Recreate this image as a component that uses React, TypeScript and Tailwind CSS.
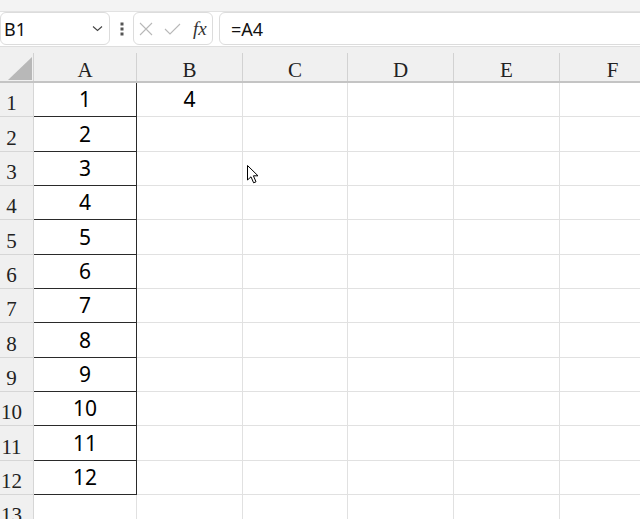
import React from "react";

const cols = [
  { l: "A", w: "w-[103px]" },
  { l: "B", w: "w-[106px]" },
  { l: "C", w: "w-[105px]" },
  { l: "D", w: "w-[106px]" },
  { l: "E", w: "w-[106px]" },
  { l: "F", w: "w-[106px]" },
];

const rows = [
  { n: 1, h: "h-[34px]", a: "1", b: "4" },
  { n: 2, h: "h-[35px]", a: "2" },
  { n: 3, h: "h-[34px]", a: "3" },
  { n: 4, h: "h-[34px]", a: "4" },
  { n: 5, h: "h-[35px]", a: "5" },
  { n: 6, h: "h-[34px]", a: "6" },
  { n: 7, h: "h-[34px]", a: "7" },
  { n: 8, h: "h-[35px]", a: "8" },
  { n: 9, h: "h-[34px]", a: "9" },
  { n: 10, h: "h-[34px]", a: "10" },
  { n: 11, h: "h-[35px]", a: "11" },
  { n: 12, h: "h-[34px]", a: "12" },
  { n: 13, h: "h-[34px]" },
];

const sans = "font-['Noto_Sans',sans-serif]";
const serif = "font-['Liberation_Serif',serif]";

export default function App() {
  return (
    <div className="relative w-[640px] h-[519px] overflow-hidden bg-white text-black">
      {/* top strip */}
      <div className="h-[12px] bg-[#f3f3f3] border-b border-[#e2e2e2]" />

      {/* formula bar */}
      <div className="h-[35px] flex border-b border-[#dedede] bg-white">
        <div className="w-[110px] shrink-0 h-[33px] border border-[#dcdcdc] rounded-[6px] flex items-center justify-between pl-[3px] pr-[6px]">
          <span className={`${sans} text-[18px] leading-none text-[#111]`}>B1</span>
          <svg width="11" height="7" viewBox="0 0 11 7" fill="none">
            <path d="M1 1.5 L5.5 5.5 L10 1.5" stroke="#444" strokeWidth="1.1" />
          </svg>
        </div>
        <div className="w-[23px] shrink-0 h-[33px] flex items-center justify-center">
          <svg width="4" height="14" viewBox="0 0 4 14">
            <rect x="0.5" y="0.5" width="3" height="3" fill="#555" />
            <rect x="0.5" y="5.5" width="3" height="3" fill="#555" />
            <rect x="0.5" y="10.5" width="3" height="3" fill="#555" />
          </svg>
        </div>
        <div className="w-[80px] shrink-0 h-[33px] border border-[#dcdcdc] rounded-[6px] flex items-center pl-[5px] gap-[11px]">
          <svg width="14" height="14" viewBox="0 0 14 14" fill="none">
            <path d="M1 1 L13 13 M13 1 L1 13" stroke="#b8b8b8" strokeWidth="1.1" />
          </svg>
          <svg width="17" height="12" viewBox="0 0 17 12" fill="none">
            <path d="M1 6 L6 11 L16 1" stroke="#b8b8b8" strokeWidth="1.1" />
          </svg>
          <span className={`${serif} italic text-[19px] leading-none text-[#333] ml-[1px]`}>fx</span>
        </div>
        <div className="flex-1 ml-[6px] mr-[-10px] h-[33px] border border-[#dcdcdc] rounded-[6px] flex items-center pl-[11px]">
          <span className={`${sans} text-[18px] leading-none text-[#111]`}>=A4</span>
        </div>
      </div>

      {/* column header */}
      <div className="h-[36px] flex bg-[#f0f0f0] border-b-2 border-[#c4c4c4]">
        <div className="w-[34px] shrink-0 flex flex-col pt-[6px]">
          <div className="flex-1 border-r border-[#d2d2d2] relative">
            <svg className="absolute left-[8px] top-[4px]" width="25" height="23" viewBox="0 0 25 23">
              <polygon points="0,23 24,23 24,0" fill="#b8b8b8" />
            </svg>
          </div>
        </div>
        {cols.map((c) => (
          <div key={c.l} className={`${c.w} shrink-0 flex flex-col pt-[6px]`}>
            <div
              className={`flex-1 border-r border-[#d2d2d2] flex items-end justify-center ${serif} text-[21px] leading-[21px] text-[#222]`}
            >
              {c.l}
            </div>
          </div>
        ))}
      </div>

      {/* rows */}
      {rows.map((r) => (
        <div key={r.n} className={`${r.h} flex`}>
          <div className="w-[34px] shrink-0 bg-[#f0f0f0] border-r border-b border-[#d6d6d6] flex items-end pb-[2px]">
            <div className={`w-[23px] text-center ${serif} text-[21px] leading-[21px] text-[#222]`}>{r.n}</div>
          </div>
          {cols.map((c, i) => {
            const isA = i === 0 && r.a;
            return (
              <div
                key={c.l}
                className={`${c.w} shrink-0 border-r border-b ${
                  isA ? "border-[#2a2a2a]" : "border-[#e1e1e1]"
                } flex items-center justify-center ${sans} text-[21px] leading-none text-black`}
              >
                {i === 0 ? r.a : i === 1 ? r.b : null}
              </div>
            );
          })}
        </div>
      ))}

      {/* mouse cursor */}
      <svg className="absolute left-[246px] top-[164px]" width="14" height="21" viewBox="0 0 14 21">
        <path
          d="M1.5 1.5 L1.5 16 L5 12.8 L7.6 18.8 L10 17.8 L7.4 11.8 L12 11.8 Z"
          fill="#fff"
          stroke="#000"
          strokeWidth="1"
          strokeLinejoin="miter"
        />
      </svg>
    </div>
  );
}
